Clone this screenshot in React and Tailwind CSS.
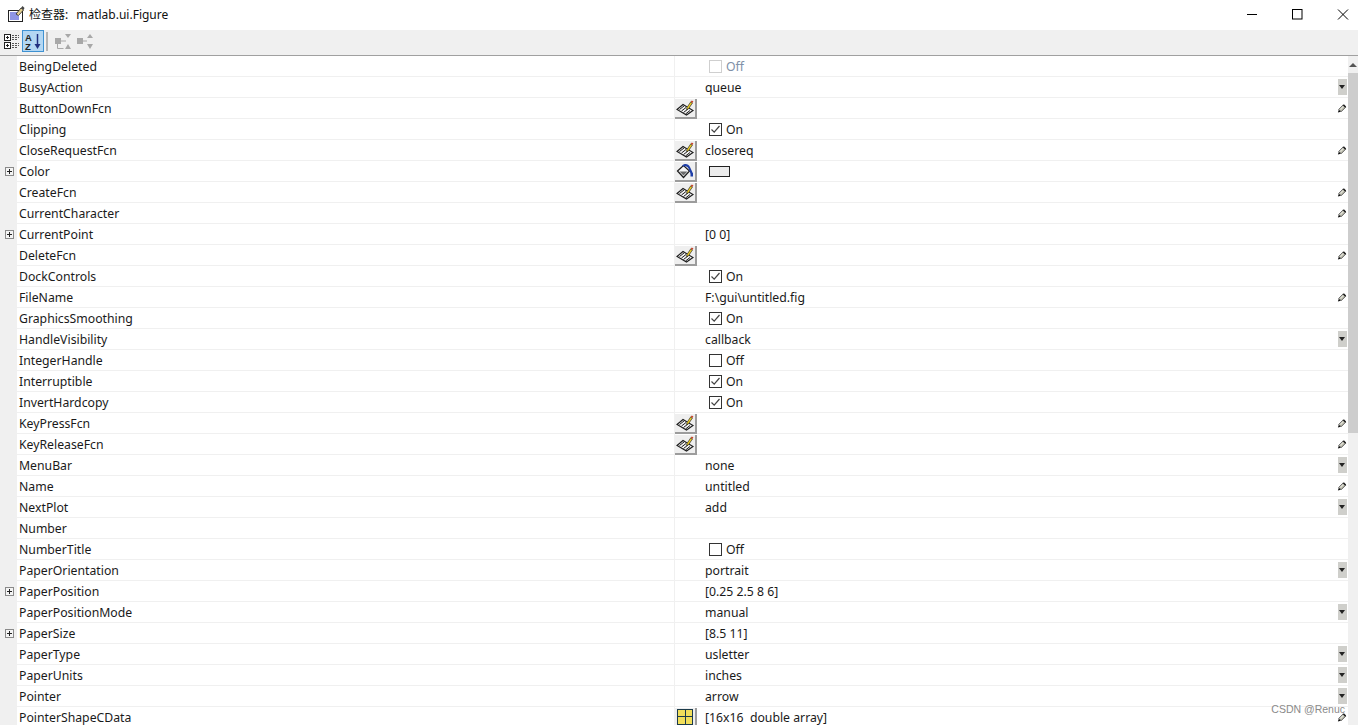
const font = "font-['Noto_Sans','Noto_Sans_CJK_SC',sans-serif]";

// kind: text | edit | drop | check | color
const rows = [
  { name: "BeingDeleted", kind: "check", value: "Off", disabled: true },
  { name: "BusyAction", kind: "drop", value: "queue" },
  { name: "ButtonDownFcn", kind: "edit", btn: "fcn" },
  { name: "Clipping", kind: "check", value: "On", on: true },
  { name: "CloseRequestFcn", kind: "edit", btn: "fcn", value: "closereq" },
  { name: "Color", kind: "color", btn: "color", plus: true },
  { name: "CreateFcn", kind: "edit", btn: "fcn" },
  { name: "CurrentCharacter", kind: "edit" },
  { name: "CurrentPoint", kind: "text", value: "[0 0]", plus: true },
  { name: "DeleteFcn", kind: "edit", btn: "fcn" },
  { name: "DockControls", kind: "check", value: "On", on: true },
  { name: "FileName", kind: "edit", value: "F:\\gui\\untitled.fig" },
  { name: "GraphicsSmoothing", kind: "check", value: "On", on: true },
  { name: "HandleVisibility", kind: "drop", value: "callback" },
  { name: "IntegerHandle", kind: "check", value: "Off" },
  { name: "Interruptible", kind: "check", value: "On", on: true },
  { name: "InvertHardcopy", kind: "check", value: "On", on: true },
  { name: "KeyPressFcn", kind: "edit", btn: "fcn" },
  { name: "KeyReleaseFcn", kind: "edit", btn: "fcn" },
  { name: "MenuBar", kind: "drop", value: "none" },
  { name: "Name", kind: "edit", value: "untitled" },
  { name: "NextPlot", kind: "drop", value: "add" },
  { name: "Number", kind: "text" },
  { name: "NumberTitle", kind: "check", value: "Off" },
  { name: "PaperOrientation", kind: "drop", value: "portrait" },
  { name: "PaperPosition", kind: "text", value: "[0.25 2.5 8 6]", plus: true },
  { name: "PaperPositionMode", kind: "drop", value: "manual" },
  { name: "PaperSize", kind: "text", value: "[8.5 11]", plus: true },
  { name: "PaperType", kind: "drop", value: "usletter" },
  { name: "PaperUnits", kind: "drop", value: "inches" },
  { name: "Pointer", kind: "drop", value: "arrow" },
  { name: "PointerShapeCData", kind: "edit", btn: "grid", value: "[16x16  double array]" },
];

function Pencil() {
  return (
    <svg width="11" height="11" viewBox="0 0 11 11">
      <path d="M2 6.5 L7 1.5 L9.5 4 L4.5 9 Z" fill="#c8c8b8" stroke="#444" strokeWidth="1" />
      <path d="M3.5 6.5 L7 3" stroke="#f4f4f0" strokeWidth="1" />
      <path d="M7 1.5 L9.5 4" stroke="#222" strokeWidth="1.6" />
      <path d="M1 10 L2 6.8 L4.2 9 Z" fill="#111" />
    </svg>
  );
}

function FcnIcon() {
  return (
    <svg width="19" height="16" viewBox="0 0 19 16">
      <path d="M1 9.5 L7 4.5 L17 10.5 L10.5 15 Z" fill="#f2f2f2" stroke="#1c1c1c" strokeWidth="1.1" />
      <path d="M3.5 9.5 L8 6 M5.5 11 L10 7.5 M7.5 12.5 L12 9 M9.5 14 L14 10.5" stroke="#1c1c1c" strokeWidth="1" />
      <path d="M10.5 9.5 L11 7.5 L14.8 1.8 L16.4 3 L12.5 8.8 Z" fill="#f5d320" stroke="#2a2a2a" strokeWidth="0.7" />
      <path d="M14.8 1.8 L15.8 0.4 L17.4 1.6 L16.4 3 Z" fill="#c8402a" />
    </svg>
  );
}

function ColorIcon() {
  return (
    <svg width="18" height="16" viewBox="0 0 18 16">
      <path d="M1.5 8 L7.5 2.5 L13.5 8 L7.5 14.5 Z" fill="#f6f6f6" stroke="#1c1c1c" strokeWidth="1.2" />
      <path d="M3.5 8.5 L11.5 8.5 L7.5 12.5 Z" fill="#6a6a6a" />
      <path d="M6 3 C8 0 12.5 0.5 14 4 L17 10.5 L14.5 10.5 L12.5 5.5 C11.5 3.5 9.5 3 8 3.5 Z" fill="#1f3fa8" />
      <rect x="14.5" y="10" width="2.5" height="3.5" fill="#1f3fa8" />
    </svg>
  );
}

function GridIcon() {
  return (
    <span className="grid grid-cols-2 gap-px w-[16px] h-[16px] bg-[#1c3a4a] border border-[#1c3a4a]">
      <span className="bg-[#f2df5a]" />
      <span className="bg-[#f2df5a]" />
      <span className="bg-[#f2df5a]" />
      <span className="bg-[#f2df5a]" />
    </span>
  );
}

function CheckBox({ on, disabled }) {
  return (
    <span
      className={`w-[13px] h-[13px] border bg-white flex items-center justify-center ${
        disabled ? "border-[#cfcfcf]" : "border-[#333333]"
      }`}
    >
      {on && (
        <svg width="11" height="11" viewBox="0 0 11 11">
          <path d="M1.5 5.5 L4.2 8.2 L9.5 2" fill="none" stroke="#444" strokeWidth="1.2" />
        </svg>
      )}
    </span>
  );
}

function Row({ row }) {
  return (
    <div className="flex h-[21px] shrink-0">
      <div className="w-[17px] shrink-0 bg-[#f0f0f0] flex items-center justify-center">
        {row.plus && (
          <span className="w-[9px] h-[9px] border border-[#8a8a8a] bg-[#f4f4f4] relative ml-[2px] -mt-[1px]">
            <span className="absolute left-[1px] top-[3px] w-[5px] h-px bg-[#222]" />
            <span className="absolute left-[3px] top-[1px] w-px h-[5px] bg-[#222]" />
          </span>
        )}
      </div>
      <div className="w-[657px] shrink-0 flex items-center pl-[2px] pt-[2px] border-b border-[#f0f0f0] text-[#1a1a1a]">
        {row.name}
      </div>
      <div className="flex-1 flex border-l border-b border-[#f0f0f0] min-w-0">
        <div className="w-[22px] shrink-0 flex justify-center items-center -mb-px">
          {row.btn && (
            <span className="w-[22px] h-[20px] bg-[#efefef] border-r-2 border-b-2 border-[#9c9c9c] flex items-center justify-center">
              {row.btn === "fcn" && <FcnIcon />}
              {row.btn === "color" && <ColorIcon />}
              {row.btn === "grid" && <GridIcon />}
            </span>
          )}
        </div>
        <div className="flex-1 flex items-center pl-[8px] min-w-0">
          {row.kind === "check" ? (
            <span className="flex items-center gap-[4px] pl-[4px]">
              <CheckBox on={row.on} disabled={row.disabled} />
              <span className={`pt-[2px] ${row.disabled ? "text-[#8090a8]" : "text-[#1a1a1a]"}`}>{row.value}</span>
            </span>
          ) : row.kind === "color" ? (
            <span className="ml-[4px] w-[21px] h-[11px] bg-[#ececec] border border-[#222]" />
          ) : (
            <span className="pt-[2px] text-[#1a1a1a] whitespace-pre">{row.value}</span>
          )}
          <span className="ml-auto flex items-center justify-center w-[10px] mr-px">
            {row.kind === "edit" && <Pencil />}
            {row.kind === "drop" && (
              <span className="w-[9px] h-[16px] bg-[#cfcfcb] flex items-center justify-center">
                <span className="w-0 h-0 border-x-[3px] border-x-transparent border-t-[4px] border-t-[#222]" />
              </span>
            )}
          </span>
        </div>
      </div>
    </div>
  );
}

export default function App() {
  return (
    <div className={`${font} w-[1358px] h-[725px] overflow-hidden bg-white flex flex-col text-[12.25px] relative`}>
      {/* title bar */}
      <div className="h-[30px] shrink-0 flex items-center pl-[7px] text-[12px]">
        <svg width="18" height="18" viewBox="0 0 18 18" className="shrink-0 -mt-[2px]">
          <rect x="1.5" y="5.5" width="14" height="11" fill="#fff" stroke="#222" />
          <path d="M3 8h8M3 10h8M3 12h9M3 14h9" stroke="#1f2bc8" strokeWidth="1" />
          <path d="M9 9 L14 3 L16.5 5 L11.5 10.5 Z" fill="#e4cf90" stroke="#222" strokeWidth="0.8" />
          <path d="M14 3 L15.5 1 L17.5 3 L16.5 5 Z" fill="#444" />
        </svg>
        <span className="ml-[4px] text-[#111]">检查器:</span>
        <span className="ml-[8px] text-[#111]">matlab.ui.Figure</span>
        <div className="ml-auto flex items-center text-black">
          <svg width="46" height="12" viewBox="0 0 46 12">
            <path d="M16 5.5h10" stroke="#000" strokeWidth="1" />
          </svg>
          <svg width="46" height="12" viewBox="0 0 46 12">
            <rect x="15.5" y="0.5" width="9.5" height="9.5" fill="none" stroke="#000" strokeWidth="1" />
          </svg>
          <svg width="35" height="12" viewBox="0 0 35 12">
            <path d="M15 0.5 L25 10.5 M25 0.5 L15 10.5" stroke="#000" strokeWidth="1" />
          </svg>
        </div>
      </div>

      {/* toolbar */}
      <div className="h-[26px] shrink-0 bg-[#f0f0f0] border-b border-[#a0a0a0] flex items-start pl-[4px]">
        <svg width="16" height="18" viewBox="0 0 16 18" className="shrink-0 mt-[3px]">
          <rect x="0.5" y="1.5" width="6" height="6" fill="#fff" stroke="#222" />
          <path d="M2 4.5h3M3.5 3v3" stroke="#222" />
          <rect x="0.5" y="9.5" width="6" height="6" fill="#fff" stroke="#222" />
          <path d="M2 12.5h3M3.5 11v3" stroke="#222" />
          <path d="M8 2.5h7M8 4.5h7M8 6.5h5M8 10.5h7M8 12.5h7M8 14.5h5" stroke="#555" strokeDasharray="2 1" />
        </svg>
        <span className="ml-[2px] w-[22px] h-[22px] bg-[#b3d7f3] border border-[#3f92d2] flex items-center justify-center shrink-0">
          <svg width="18" height="19" viewBox="0 0 18 19">
            <text x="1" y="9" fontSize="9.5" fontWeight="bold" fill="#222" fontFamily="Liberation Sans">A</text>
            <text x="1" y="18" fontSize="9.5" fontWeight="bold" fill="#222" fontFamily="Liberation Sans">Z</text>
            <path d="M13.5 2v12" stroke="#203080" strokeWidth="1.5" />
            <path d="M10.5 12h6l-3 5z" fill="#203080" />
          </svg>
        </span>
        <span className="ml-[2px] mt-[2px] w-[2px] h-[19px] bg-[#b5b5b5]" />
        <svg width="18" height="18" viewBox="0 0 18 18" className="ml-[6px] mt-[3px] shrink-0">
          <rect x="1" y="5" width="6" height="6" fill="#a8a8a8" />
          <path d="M3.5 11v4.5h6" stroke="#a8a8a8" fill="none" />
          <path d="M11 1h6l-3 4zM11 16h6l-3-5z" fill="#a8a8a8" />
          <path d="M7 8h5" stroke="#a8a8a8" />
        </svg>
        <svg width="18" height="18" viewBox="0 0 18 18" className="ml-[4px] mt-[3px] shrink-0">
          <rect x="1" y="5" width="6" height="6" fill="#a8a8a8" />
          <path d="M11 5h6l-3-4zM11 11h6l-3 5z" fill="#a8a8a8" />
          <path d="M7 8h4" stroke="#a8a8a8" />
        </svg>
      </div>

      {/* property table */}
      <div className="flex-1 flex min-h-0">
        <div className="flex-1 flex flex-col overflow-hidden min-w-0">
          {rows.map((r) => (
            <Row key={r.name} row={r} />
          ))}
        </div>
        <div className="w-[10px] shrink-0 flex flex-col bg-[#f0f0f0] overflow-hidden">
          <div className="h-[17px] flex items-center justify-center">
            <span className="w-0 h-0 border-x-[4px] border-x-transparent border-b-[4px] border-b-[#555]" />
          </div>
          <div className="h-[360px] bg-[#cdcdcd]" />
        </div>
      </div>

      <span className="absolute right-[13px] bottom-[7px] text-[10.5px] text-[#8a8a8a] font-['Liberation_Sans',sans-serif]">
        CSDN @Renuc
      </span>
    </div>
  );
}
